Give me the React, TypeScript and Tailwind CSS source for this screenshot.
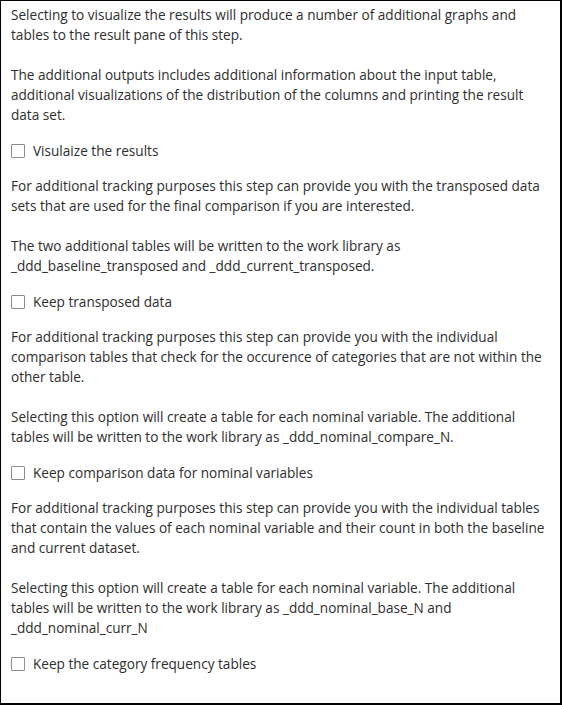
import React from "react";

const P = ({ children }: { children: React.ReactNode }) => (
  <p className="m-0 leading-[20px] whitespace-nowrap">{children}</p>
);

const Check = ({ label }: { label: string }) => (
  <div className="flex items-center h-5 mt-4 mb-[15px]">
    <span className="inline-block w-[14px] h-[14px] border border-[#8c8c8c] bg-white rounded-[1px]" />
    <span className="ml-[8px] leading-[20px]">{label}</span>
  </div>
);

export default function App() {
  return (
    <div
      className="w-[562px] h-[705px] bg-white border-t border-l border-r-2 border-b-2 border-black box-border pl-[10px] pr-[10px] pt-[4px] text-[13.6px] text-[#2e2e2e]"
      style={{ fontFamily: '"Open Sans", "Noto Sans", sans-serif' }}
    >
      <P>
        Selecting to visualize the results will produce a number of additional graphs and
        <br />
        tables to the result pane of this step.
      </P>
      <div className="h-5" />
      <P>
        The additional outputs includes additional information about the input table,
        <br />
        additional visualizations of the distribution of the columns and printing the result
        <br />
        data set.
      </P>
      <Check label="Visulaize the results" />
      <P>
        For additional tracking purposes this step can provide you with the transposed data
        <br />
        sets that are used for the final comparison if you are interested.
      </P>
      <div className="h-5" />
      <P>
        The two additional tables will be written to the work library as
        <br />
        _ddd_baseline_transposed and _ddd_current_transposed.
      </P>
      <Check label="Keep transposed data" />
      <P>
        For additional tracking purposes this step can provide you with the individual
        <br />
        comparison tables that check for the occurence of categories that are not within the
        <br />
        other table.
      </P>
      <div className="h-5" />
      <P>
        Selecting this option will create a table for each nominal variable. The additional
        <br />
        tables will be written to the work library as _ddd_nominal_compare_N.
      </P>
      <Check label="Keep comparison data for nominal variables" />
      <P>
        For additional tracking purposes this step can provide you with the individual tables
        <br />
        that contain the values of each nominal variable and their count in both the baseline
        <br />
        and current dataset.
      </P>
      <div className="h-5" />
      <P>
        Selecting this option will create a table for each nominal variable. The additional
        <br />
        tables will be written to the work library as _ddd_nominal_base_N and
        <br />
        _ddd_nominal_curr_N
      </P>
      <Check label="Keep the category frequency tables" />
    </div>
  );
}
